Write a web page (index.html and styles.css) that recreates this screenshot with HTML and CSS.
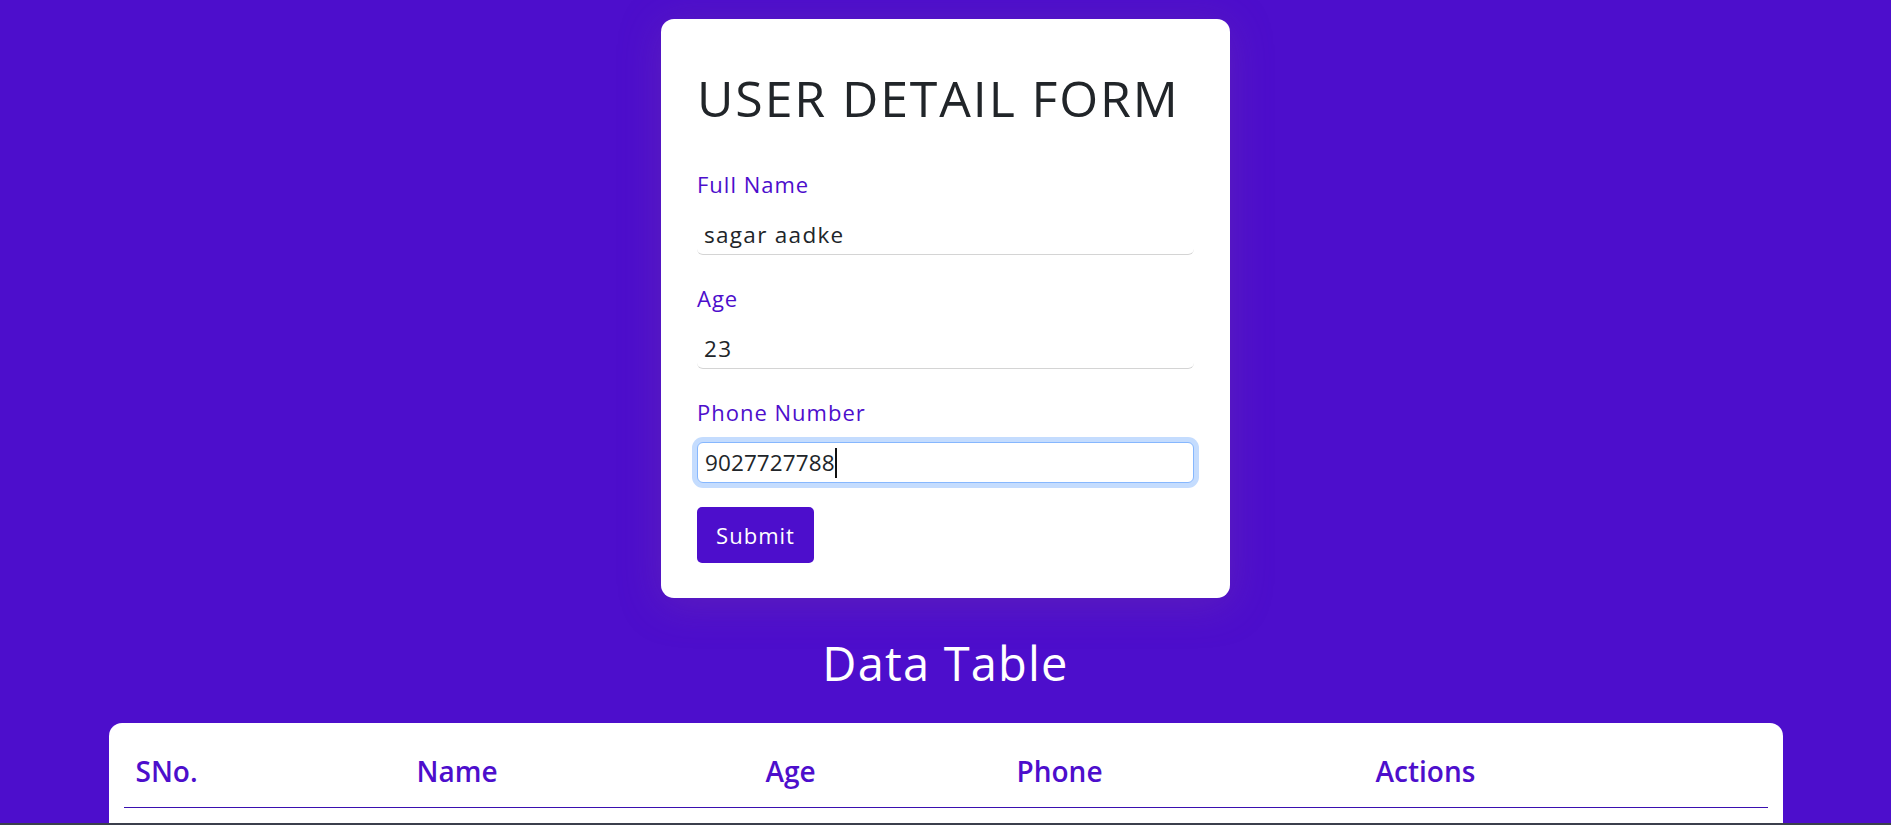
FILE: index.html
```html
<!DOCTYPE html>
<html lang="en">
<head>
<meta charset="utf-8">
<title>User Detail Form</title>
<link rel="stylesheet" href="styles.css">
</head>
<body>
<main class="page">
  <section class="form-card">
    <h1 class="form-title">USER DETAIL FORM</h1>
    <div class="field">
      <label class="field-label" for="fullname">Full Name</label>
      <input class="field-input" id="fullname" type="text" value="sagar aadke">
    </div>
    <div class="field">
      <label class="field-label" for="age">Age</label>
      <input class="field-input" id="age" type="text" value="23">
    </div>
    <div class="field">
      <label class="field-label">Phone Number</label>
      <div class="field-input field-input--focused"><span>9027727788</span><span class="caret"></span></div>
    </div>
    <button class="submit-btn" type="button">Submit</button>
  </section>

  <h2 class="table-title">Data Table</h2>

  <section class="table-card">
    <table class="data-table">
      <thead>
        <tr>
          <th class="col-sno">SNo.</th>
          <th class="col-name">Name</th>
          <th class="col-age">Age</th>
          <th class="col-phone">Phone</th>
          <th class="col-actions">Actions</th>
        </tr>
      </thead>
      <tbody></tbody>
    </table>
  </section>
</main>
<div class="window-edge"></div>
</body>
</html>
```

FILE: styles.css
```css
* { box-sizing: border-box; }

html, body {
  margin: 0;
  padding: 0;
  height: 100%;
}

body {
  background: #4d0ecc;
  font-family: "Open Sans", "Liberation Sans", sans-serif;
  color: #212529;
  overflow: hidden;
}

.page {
  display: flex;
  flex-direction: column;
  align-items: center;
  padding-top: 19px;
}

.form-card {
  width: 569px;
  background: #fff;
  border-radius: 13px;
  padding: 49px 36px 35px;
  box-shadow: 0 6px 40px rgba(110, 50, 170, 0.45);
  display: flex;
  flex-direction: column;
}

.form-title {
  margin: 0 0 42px;
  font-size: 50px;
  font-weight: 400;
  line-height: 60px;
  letter-spacing: 1.9px;
  white-space: nowrap;
  color: #212529;
}

.field {
  display: flex;
  flex-direction: column;
  margin-bottom: 29px;
}

.field:last-of-type { margin-bottom: 24px; }

.field-label {
  font-size: 22px;
  line-height: 28px;
  letter-spacing: 1px;
  color: #4d0ecc;
  margin-bottom: 16px;
}

.field-input {
  display: flex;
  align-items: center;
  height: 41px;
  width: 100%;
  border: none;
  border-bottom: 1px solid #d4d4d4;
  border-radius: 6px;
  padding: 0 7px;
  font-family: inherit;
  font-size: 22.5px;
  letter-spacing: 1.3px;
  color: #212529;
  background: #fff;
  outline: none;
}

.field-input--focused {
  border: 1px solid #86b7fe;
  box-shadow: 0 0 0 5px #c4dcfe;
  letter-spacing: 0.1px;
}

.caret {
  display: inline-block;
  width: 2px;
  height: 30px;
  background: #111;
}

.submit-btn {
  align-self: flex-start;
  width: 117px;
  height: 56px;
  border: none;
  border-radius: 5px;
  background: #4d0ecc;
  color: #fff;
  font-family: inherit;
  font-size: 22px;
  letter-spacing: 1px;
}

.table-title {
  margin: 37px 0 0;
  font-size: 47px;
  font-weight: 400;
  line-height: 56px;
  letter-spacing: 1.2px;
  color: #fff;
}

.table-card {
  width: 1674px;
  min-height: 200px;
  margin-top: 32px;
  background: #fff;
  border-radius: 13px;
  padding: 15px 15px 0;
}

.data-table {
  width: 100%;
  border-collapse: collapse;
}

.data-table th {
  text-align: left;
  font-weight: 600;
  font-size: 28px;
  line-height: 34px;
  color: #4d0ecc;
  padding: 16px 12px 19px;
  border-bottom: 1px solid #3a10b0;
}

.col-sno { width: 281px; }
.col-name { width: 349px; }
.col-age { width: 251px; }
.col-phone { width: 359px; }

.window-edge {
  position: fixed;
  left: 0;
  right: 0;
  bottom: 0;
  height: 2px;
  background: #3b3f4c;
}
```
